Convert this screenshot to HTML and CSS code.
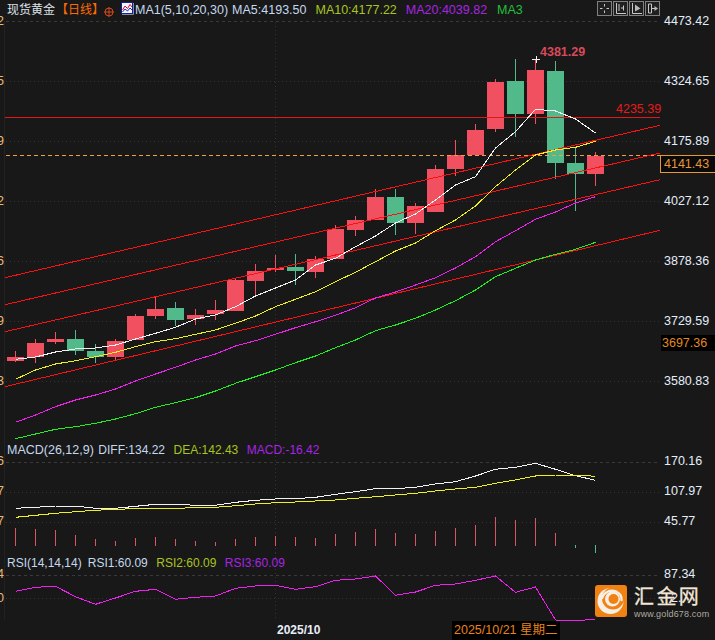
FILE: index.html
```html
<!DOCTYPE html>
<html lang="zh">
<head>
<meta charset="utf-8">
<title>现货黄金 日线</title>
<link rel="stylesheet" href="styles.css">
</head>
<body>
<div class="chart">

  <section class="pane pane-main">
    <svg class="plot" viewBox="0 0 715 440" width="715" height="440" aria-hidden="true">
      <g class="grid">
        <line class="dash" x1="6" y1="21.5" x2="660" y2="21.5"/>
        <line x1="6" y1="81.5" x2="660" y2="81.5"/>
        <line x1="6" y1="141.5" x2="660" y2="141.5"/>
        <line x1="6" y1="201.5" x2="660" y2="201.5"/>
        <line x1="6" y1="261.5" x2="660" y2="261.5"/>
        <line x1="6" y1="321.5" x2="660" y2="321.5"/>
        <line x1="6" y1="381.5" x2="660" y2="381.5"/>
        <line x1="275.5" y1="22" x2="275.5" y2="440"/>
      </g>
      <line class="frame" x1="4.5" y1="21" x2="4.5" y2="440"/>
      <g class="up">
        <path class="wick" d="M15.5 351V362M35.5 339V363M55.5 332V344M115.5 339V360M135.5 314V340M155.5 296V319M195.5 309V325M215.5 300V320M235.5 279V311M255.5 264V296M275.5 255V272M315.5 256V278M335.5 225V259M355.5 216V236M375.5 189V220M415.5 203V234M435.5 165V212M455.5 140V176M475.5 124V155M495.5 79V132M535.5 60V124M595.5 152V186"/>
        <rect x="7" y="357" width="17" height="4"/>
        <rect x="27" y="343" width="17" height="14"/>
        <rect x="47" y="339" width="17" height="3"/>
        <rect x="107" y="341" width="17" height="16"/>
        <rect x="127" y="316" width="17" height="24"/>
        <rect x="147" y="309" width="17" height="7"/>
        <rect x="187" y="315" width="17" height="4"/>
        <rect x="207" y="310" width="17" height="4"/>
        <rect x="227" y="280" width="17" height="31"/>
        <rect x="247" y="271" width="17" height="10"/>
        <rect x="267" y="268" width="17" height="2"/>
        <rect x="307" y="259" width="17" height="13"/>
        <rect x="327" y="229" width="17" height="30"/>
        <rect x="347" y="220" width="17" height="10"/>
        <rect x="367" y="197" width="17" height="23"/>
        <rect x="407" y="206" width="17" height="17"/>
        <rect x="427" y="169" width="17" height="43"/>
        <rect x="447" y="155" width="17" height="14"/>
        <rect x="467" y="130" width="17" height="25"/>
        <rect x="487" y="82" width="17" height="47"/>
        <rect x="527" y="70" width="17" height="44"/>
        <rect x="587" y="156" width="17" height="18"/>
      </g>
      <g class="down">
        <path class="wick" d="M75.5 330V355M95.5 344V363M175.5 302V326M295.5 254V285M395.5 189V235M515.5 59V137M555.5 61V179M575.5 147V211"/>
        <rect x="67" y="339" width="17" height="12"/>
        <rect x="87" y="351" width="17" height="6"/>
        <rect x="167" y="308" width="17" height="12"/>
        <rect x="287" y="267" width="17" height="4"/>
        <rect x="387" y="197" width="17" height="26"/>
        <rect x="507" y="81" width="17" height="33"/>
        <rect x="547" y="71" width="17" height="92"/>
        <rect x="567" y="163" width="17" height="11"/>
      </g>
      <line class="resist" x1="5" y1="117.5" x2="660" y2="117.5"/>
      <line class="last" x1="6" y1="155.5" x2="660" y2="155.5"/>
      <g class="channel">
        <line x1="5" y1="277.7" x2="660" y2="125.3"/>
        <line x1="5" y1="304.7" x2="660" y2="153"/>
        <line x1="5" y1="331.7" x2="660" y2="179.7"/>
        <line x1="5" y1="386.7" x2="660" y2="230.3"/>
      </g>
      <polyline class="ma ma-white" points="15.5,359.3 35.5,357 55.5,352 75.5,349 95.5,348 115.5,345 135.5,339 155.5,333.3 175.5,327.3 195.5,319 215.5,315 235.5,306.7 255.5,296 275.5,288 295.5,280 315.5,265 335.5,258.3 355.5,246.7 375.5,236 395.5,223 415.5,214 435.5,200 455.5,185 475.5,176.7 495.5,148 515.5,131.7 535.5,109.3 555.5,111 575.5,119 595.5,133"/>
      <polyline class="ma ma-yellow" points="15.5,379.3 35.5,370 55.5,364 75.5,360.7 95.5,356.7 115.5,352.3 135.5,346.7 155.5,341.7 175.5,338.7 195.5,334.3 215.5,330 235.5,323.3 255.5,316 275.5,306.7 295.5,299.3 315.5,291.7 335.5,281.7 355.5,272.3 375.5,261.7 395.5,251 415.5,243 435.5,230.7 455.5,220 475.5,206 495.5,186.7 515.5,170 535.5,155 555.5,150 575.5,147.3 595.5,141.3"/>
      <polyline class="ma ma-magenta" points="15.5,422.3 35.5,415 55.5,406.7 75.5,400 95.5,395 115.5,389 135.5,381 155.5,374 175.5,367.3 195.5,360 215.5,354 235.5,346 255.5,340.7 275.5,334.3 295.5,327.7 315.5,321.7 335.5,315.3 355.5,307.7 375.5,298 395.5,292 415.5,285 435.5,277.7 455.5,268 475.5,256.7 495.5,241.7 515.5,230.7 535.5,219.3 555.5,212 575.5,203 595.5,196.7"/>
      <polyline class="ma ma-green" points="15.5,438.7 35.5,434 55.5,429.3 75.5,426.7 95.5,423.3 115.5,419 135.5,413.7 155.5,407.3 175.5,402.7 195.5,397.7 215.5,391 235.5,383.3 255.5,376.7 275.5,370 295.5,362.7 315.5,356 335.5,347.7 355.5,340 375.5,330.7 395.5,325 415.5,318.3 435.5,310 455.5,300.7 475.5,290 495.5,276.7 515.5,268.3 535.5,260 555.5,254.3 575.5,249.3 595.5,242.3"/>
      <path class="cross" d="M532 59.5H540M536.5 56V63"/>
    </svg>

    <header class="legend legend-main">
      <span class="name">现货黄金</span>
      <span class="period">【日线】</span>
      <svg class="target" viewBox="0 0 10 10" width="10" height="10" aria-hidden="true"><circle cx="5" cy="5" r="4"/><path d="M0 5H10M5 0V10"/></svg>
      <svg class="ma-icon" viewBox="0 0 13 13" width="13" height="13" aria-hidden="true">
        <rect class="ma-icon-bg" x="0.5" y="0.5" width="11" height="11"/>
        <path class="ma-icon-r" d="M1.5 8L4 4L6.5 6.5L9 2.5L11 5"/>
        <path class="ma-icon-b" d="M1.5 10L4 7L6.5 9L9 6L11 8"/>
        <path class="ma-icon-s" d="M12.5 1V12.5H1"/>
      </svg>
      <span class="item c-info gap-4">MA1(5,10,20,30)</span>
      <span class="item c-info gap-9">MA5:4193.50</span>
      <span class="item c-yellow gap-9">MA10:4177.22</span>
      <span class="item c-purple gap-10">MA20:4039.82</span>
      <span class="item c-green">MA3</span>
    </header>

    <div class="tools">
      <svg class="tool" viewBox="0 0 15 15" width="15" height="15" aria-hidden="true"><rect x="0.5" y="0.5" width="14" height="14"/><path d="M7.5 3V5.5M7.5 9.5V12M3 7.5H5.5M9.5 7.5H12"/></svg>
      <svg class="tool" viewBox="0 0 15 15" width="15" height="15" aria-hidden="true"><rect x="0.5" y="0.5" width="14" height="14"/><path d="M3.5 2V12.5H13M6 3V10M10.5 4.5V9.5M8 7H10"/></svg>
      <svg class="tool" viewBox="0 0 15 15" width="15" height="15" aria-hidden="true"><rect x="0.5" y="0.5" width="14" height="14"/><path d="M3.5 2V12.5H13"/><path class="fill" d="M6 3.5L11.5 7.5L6 10.5Z"/></svg>
      <svg class="tool" viewBox="0 0 15 15" width="15" height="15" aria-hidden="true"><rect x="0.5" y="0.5" width="14" height="14"/><path d="M3.5 3H6.5V12H3.5ZM6.5 7.5H12"/><path class="fill" d="M9.5 5L13 7.5L9.5 10Z"/></svg>
    </div>

    <div class="ticks ticks-left ticks-main" aria-hidden="true">
      <span>4473.42</span><span>4324.65</span><span>4175.89</span><span>4027.12</span><span>3878.36</span><span>3729.59</span><span>3580.83</span>
    </div>
    <div class="ticks ticks-right ticks-main">
      <span>4473.42</span><span>4324.65</span><span>4175.89</span><span>4027.12</span><span>3878.36</span><span>3729.59</span><span>3580.83</span>
    </div>

    <span class="note note-high">4381.29</span>
    <span class="note note-resist">4235.39</span>
    <span class="tag tag-last">4141.43</span>
    <span class="tag tag-low">3697.36</span>
  </section>

  <section class="pane pane-macd">
    <svg class="plot" viewBox="0 440 715 113" width="715" height="113" aria-hidden="true">
      <g class="grid">
        <line class="dash" x1="6" y1="462.5" x2="660" y2="462.5"/>
        <line x1="6" y1="492.5" x2="660" y2="492.5"/>
        <line x1="6" y1="522.5" x2="660" y2="522.5"/>
        <line x1="275.5" y1="440" x2="275.5" y2="553"/>
      </g>
      <line class="frame" x1="4.5" y1="440" x2="4.5" y2="553"/>
      <path class="hist-up" d="M15.5 527.7V546M35.5 529V546M55.5 530V546M75.5 535V546M95.5 539V546M115.5 541V546M135.5 538V546M155.5 536.7V546M175.5 539V546M195.5 541V546M215.5 542V546M235.5 539V546M255.5 537V546M275.5 536V546M295.5 537V546M315.5 538V546M335.5 534V546M355.5 532V546M375.5 529V546M395.5 533V546M415.5 534V546M435.5 531V546M455.5 528V546M475.5 525V546M495.5 517V546M515.5 520V546M535.5 518V546M555.5 533V546"/>
      <path class="hist-down" d="M575.5 545V548M595.5 545V553"/>
      <polyline class="ma ma-white" points="15.5,508.3 35.5,507.3 55.5,506 75.5,506 95.5,508.3 115.5,508.3 135.5,506.3 155.5,504.3 175.5,504.3 195.5,505.3 215.5,505.3 235.5,502.3 255.5,500.3 275.5,499 295.5,498.7 315.5,497.3 335.5,494.3 355.5,491.7 375.5,488.7 395.5,488.7 415.5,487.3 435.5,484 455.5,481.7 475.5,476 495.5,469.3 515.5,467.3 535.5,463.3 555.5,469.3 575.5,475.7 595.5,480.3"/>
      <polyline class="ma ma-yellow" points="15.5,517.3 35.5,515.3 55.5,513.3 75.5,511.7 95.5,510.3 115.5,509.3 135.5,508.7 155.5,508.3 175.5,508.3 195.5,507.7 215.5,507.3 235.5,505.7 255.5,504 275.5,502.7 295.5,502 315.5,501 335.5,500 355.5,498.3 375.5,496.7 395.5,495 415.5,493.3 435.5,491 455.5,489 475.5,487.3 495.5,483.3 515.5,480 535.5,476 555.5,475 575.5,475 595.5,476.3"/>
    </svg>
    <div class="legend legend-macd">
      <span class="item c-info lead-macd">MACD(26,12,9)</span>
      <span class="item c-info">DIFF:134.22</span>
      <span class="item c-yellow">DEA:142.43</span>
      <span class="item c-purple">MACD:-16.42</span>
    </div>
    <div class="ticks ticks-left ticks-macd" aria-hidden="true"><span>170.16</span><span>107.97</span><span>45.77</span></div>
    <div class="ticks ticks-right ticks-macd"><span>170.16</span><span>107.97</span><span>45.77</span></div>
  </section>

  <section class="pane pane-rsi">
    <svg class="plot" viewBox="0 553 715 67" width="715" height="67" aria-hidden="true">
      <g class="grid">
        <line class="dash" x1="6" y1="575.5" x2="660" y2="575.5"/>
        <line x1="6" y1="598.5" x2="660" y2="598.5"/>
        <line x1="275.5" y1="553" x2="275.5" y2="620"/>
      </g>
      <line class="frame" x1="4.5" y1="553" x2="4.5" y2="620"/>
      <polyline class="ma ma-magenta" points="15.5,591.3 35.5,587.3 55.5,586.3 75.5,596.7 95.5,604.3 115.5,598 135.5,591.3 155.5,589.3 175.5,599.3 195.5,597.3 215.5,596 235.5,588.3 255.5,586 275.5,585.3 295.5,589.3 315.5,586.7 335.5,580.3 355.5,579 375.5,576 395.5,595.3 415.5,592 435.5,585.3 455.5,584 475.5,580.3 495.5,576 515.5,592.3 535.5,587 555.5,620 575.5,621 595.5,619"/>
    </svg>
    <div class="legend legend-rsi">
      <span class="item c-info lead-rsi">RSI(14,14,14)</span>
      <span class="item c-info">RSI1:60.09</span>
      <span class="item c-yellow">RSI2:60.09</span>
      <span class="item c-purple">RSI3:60.09</span>
    </div>
    <div class="ticks ticks-left ticks-rsi" aria-hidden="true"><span>87.34</span><span>62.40</span></div>
    <div class="ticks ticks-right ticks-rsi"><span>87.34</span><span class="tick-covered">2.</span></div>
  </section>

  <footer class="timeline">
    <span class="month">2025/10</span>
    <span class="cursor-date">2025/10/21 星期二</span>
  </footer>

  <aside class="watermark">
    <svg class="wm-logo" viewBox="0 0 32 32" width="32" height="32" aria-hidden="true">
      <rect class="wm-box" width="32" height="32" rx="3"/>
      <circle class="wm-white" cx="15.5" cy="16" r="13"/>
      <circle class="wm-orange" cx="18" cy="13.5" r="11"/>
      <path class="wm-arc" d="M7 13C9 7 15 4.5 21 6.5C25 8 27 12 26.5 15"/>
      <circle class="wm-white" cx="17.5" cy="14" r="7.5"/>
      <circle class="wm-orange" cx="18.5" cy="14" r="5"/>
    </svg>
    <div class="wm-text">
      <strong class="wm-name">汇金网</strong>
      <span class="wm-url">www.gold678.com</span>
    </div>
  </aside>
</div>
</body>
</html>
```
FILE: styles.css
```css
* { box-sizing: border-box; }
html, body { margin: 0; padding: 0; background: #181818; }
.chart {
  position: relative;
  width: 715px;
  height: 640px;
  overflow: hidden;
  background: #181818;
  font: 12.5px/16px "Liberation Sans", "Noto Sans CJK SC", sans-serif;
  color: #e4eefa;
}
.pane { position: relative; }
.pane-main { height: 440px; padding-top: 1px; }
.pane-macd { height: 113px; padding-top: 2px; }
.pane-rsi { height: 67px; padding-top: 2px; }
.plot { position: absolute; left: 0; top: 0; display: block; overflow: visible; }

/* svg strokes */
.grid line { stroke: #343434; stroke-width: 1; stroke-dasharray: 1 3; shape-rendering: crispEdges; }
.grid line.dash { stroke: #3a3a3a; stroke-dasharray: 3 3; }
.frame { stroke: #222; shape-rendering: crispEdges; }
.up rect { fill: #f0505f; }
.down rect { fill: #52b98a; }
.up .wick { stroke: #f0505f; fill: none; shape-rendering: crispEdges; }
.down .wick { stroke: #52b98a; fill: none; shape-rendering: crispEdges; }
.resist { stroke: #e01818; shape-rendering: crispEdges; }
.last { stroke: #f0a040; stroke-dasharray: 4 3; shape-rendering: crispEdges; }
.channel line { stroke: #ff0f0f; shape-rendering: crispEdges; }
.ma { fill: none; stroke-width: 1; shape-rendering: crispEdges; }
.ma-white { stroke: #f2f2f2; }
.ma-yellow { stroke: #f0f020; }
.ma-magenta { stroke: #f020f0; }
.ma-green { stroke: #20f020; }
.cross { stroke: #f2f2f2; fill: none; shape-rendering: crispEdges; }
.hist-up { stroke: #d85565; fill: none; shape-rendering: crispEdges; }
.hist-down { stroke: #52b98a; fill: none; shape-rendering: crispEdges; }

/* legends */
.legend {
  position: relative;
  display: flex;
  align-items: center;
  white-space: nowrap;
  padding-left: 7px;
  height: 16px;
}
.legend-main { height: 18px; }
.legend-macd, .legend-rsi { gap: 8.5px; font-size: 12px; }
.lead-macd { margin-right: -4px; font-size: 12.5px; }
.lead-rsi { margin-right: -2.5px; }
.name { font-size: 12px; color: #dde3ea; width: 48px; }
.period { font-size: 12px; color: #ff6a00; width: 48px; margin-left: 2px; text-indent: -1px; }
.target { margin-left: -1px; margin-top: 3px; }
.target circle, .target path { fill: none; stroke: #d8481a; stroke-width: 1; }
.ma-icon { margin-left: 7px; margin-right: 1px; margin-top: -4px; }
.ma-icon-bg { fill: #f4f4ff; stroke: #1020a0; }
.ma-icon-r { fill: none; stroke: #e01020; stroke-width: 1; }
.ma-icon-b { fill: none; stroke: #1030c0; stroke-width: 1; }
.ma-icon-s { fill: none; stroke: #8a8a9a; stroke-width: 1; }
.gap-4 { margin-right: 4px; }
.gap-9 { margin-right: 9px; }
.gap-10 { margin-right: 10px; }
.c-info { color: #c4d8ee; }
.c-yellow { color: #a8c420; }
.c-purple { color: #a824e4; }
.c-green { color: #22c03c; }

/* toolbar */
.tools {
  position: absolute;
  left: 597px;
  top: 1px;
  display: flex;
  gap: 1px;
}
.tool { display: block; }
.tool rect { fill: #202020; stroke: #808080; }
.tool path { fill: none; stroke: #c8c8c8; stroke-width: 1; }
.tool path.fill { fill: #b8b8b8; stroke: none; }

/* axes */
.ticks { position: absolute; display: flex; flex-direction: column; }
.ticks span { display: block; white-space: nowrap; }
.ticks-right { left: 664px; }
.ticks-left { left: 0; width: 4px; overflow: hidden; align-items: flex-end; color: #e8b878; }
.ticks-main { top: 13px; gap: 44px; }
.ticks-macd { top: 13px; gap: 14px; }
.ticks-rsi { top: 13px; gap: 8px; }
.ticks .tick-covered { padding-left: 7px; }

.note { position: absolute; font-weight: 700; white-space: nowrap; }
.note-high { left: 540px; top: 44px; color: #d84a5a; }
.note-resist { left: 616px; top: 101px; color: #e81818; font-weight: 400; }
.tag { position: absolute; display: block; white-space: nowrap; }
.tag-last {
  left: 660px; top: 155px; width: 55px; height: 18px; line-height: 16px;
  padding-left: 3px; background: #0a0a0a; border: 1px solid #e8963a; border-right: 0; color: #e8963a;
}
.tag-low {
  left: 661px; top: 335px; width: 54px; height: 16px; padding-left: 1px;
  background: #000; color: #e08a20;
}

/* time axis */
.timeline { position: relative; height: 20px; padding-left: 277px; display: flex; align-items: center; }
.month { font-size: 12px; font-weight: 700; color: #e8eef6; }
.cursor-date {
  position: absolute; left: 452px; top: 1px; height: 19px; padding: 0 2px;
  line-height: 19px; background: #000; color: #e8821c; white-space: nowrap;
}

/* watermark */
.watermark { position: absolute; left: 595px; top: 585px; display: flex; gap: 7px; }
.wm-logo { display: block; }
.wm-box { fill: #f08214; }
.wm-white { fill: #f8efe6; }
.wm-orange { fill: #f08214; }
.wm-arc { fill: none; stroke: #f8efe6; stroke-width: 2.4; stroke-linecap: round; }
.wm-text { display: flex; flex-direction: column; margin-top: 1px; }
.wm-name { font-size: 20px; line-height: 23px; font-weight: 400; letter-spacing: 2.4px; color: #f2e6d8; white-space: nowrap; -webkit-text-stroke: 0.3px #f2e6d8; }
.wm-url { font-size: 9px; line-height: 11px; color: #b0aaa2; letter-spacing: 0.15px; white-space: nowrap; }
```
